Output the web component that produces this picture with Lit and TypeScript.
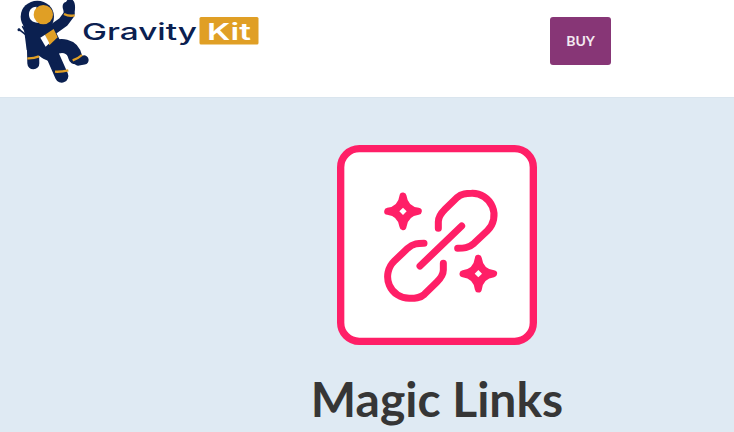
import { LitElement, html, css, svg } from "lit";
import { customElement } from "lit/decorators.js";

const NAVY = "#0b2050";
const GOLD = "#e09f25";

@customElement("app-root")
export class AppRoot extends LitElement {
  static styles = css`
    :host { display: block; height: 432px; overflow: hidden; background: #dfeaf3; font-family: Lato, "Liberation Sans", sans-serif; }
    .top { display: flex; align-items: flex-start; height: 97px; background: #fff; box-shadow: 0 1px 1px rgba(0,0,0,.02); }
    .logo { display: block; width: 270px; height: 97px; flex: none; }
    .logo text { font-family: Inter, "Liberation Sans", sans-serif; }
    .buy { flex: none; display: flex; align-items: center; justify-content: center; width: 61px; height: 48px; padding-bottom: 2px; margin: 17px 0 0 280px; border-radius: 3px; background: #873676; color: #f4e9f1; font-size: 14px; font-weight: 700; box-sizing: border-box; }
    .hero { display: flex; flex-direction: column; align-items: center; padding: 48px 0 0 140px; }
    .mark { display: block; width: 200px; height: 200px; }
    h1 { margin: 18px 0 0; font-size: 48px; line-height: 72px; font-weight: 700; color: #363636; white-space: nowrap; }
  `;

  private star(cx: number, cy: number) {
    return svg`<g transform="translate(${cx} ${cy})">
      <path fill="#ff1f67" d="M0-46Q5-5 46 0Q5 5 0 46Q-5 5-46 0Q-5-5 0-46Z"/>
      <path fill="#fff" stroke="none" d="M0-11L11 0L0 11L-11 0Z"/>
    </g>`;
  }

  render() {
    const upper = "M325 265V245C325 230 335 218 345 208L382 172C395 160 410 160 425 160A65 65 0 0 1 472 272L432 310C415 325 400 325 383 325";
    return html`
      <div class="top">
        <svg class="logo" viewBox="0 0 270 97">
          <g transform="translate(10 0) scale(.3333)">
            <path d="M27 88L47 104M38 80L48 98" stroke=${NAVY} stroke-width="5" stroke-linecap="round" fill="none"/>
            <circle cx="27" cy="89" r="4.500" fill=${NAVY}/>
            <g fill="none" stroke=${NAVY} stroke-linecap="round" stroke-linejoin="round">
              <path stroke-width="36" d="M68 115L70 190"/>
              <path stroke-width="40" d="M125 160L155 228"/>
              <path stroke-width="42" d="M125 150C150 130 188 135 196 172"/>
              <path stroke-width="32" d="M112 100L160 66L178 42"/>
              <path stroke-width="28" d="M205 183L222 180"/>
            </g>
            <ellipse cx="82" cy="50" rx="50" ry="48" fill=${NAVY}/>
            <path fill=${NAVY} d="M40 72L130 80L152 125L140 190C115 185 95 175 85 165L50 150Z"/>
            <path fill=${NAVY} d="M160 30C156 18 158 8 168 6L172 0L188 0C196 6 197 24 193 42L162 44Z"/>
            <path fill="#fff" d="M80 20C62 20 56 34 57 46C58 60 70 70 86 68C76 50 76 34 80 20Z"/>
            <circle cx="100" cy="44" r="29" fill=${GOLD}/>
            <path fill=${GOLD} d="M105 104L131 87L143 112L118 136Z"/>
            <path fill="#fff" d="M91 113L105 104L118 130L107 140Z"/>
            <path d="M52 175Q70 176 87 169M135 215Q155 216 175 211M188 181Q204 176 216 165M162 42Q178 50 194 46" stroke=${GOLD} stroke-width="7" fill="none"/>
          </g>
          <text x="82" y="39.500" font-size="22.500" font-weight="500" fill=${NAVY} textLength="115" lengthAdjust="spacingAndGlyphs">Gravity</text>
          <rect x="199.500" y="17" width="59" height="27.500" rx="1.500" fill=${GOLD}/>
          <text x="207" y="39.500" font-size="23" font-weight="600" fill="#fff" textLength="44" lengthAdjust="spacingAndGlyphs">Kit</text>
        </svg>
        <div class="buy">BUY</div>
      </div>
      <main class="hero">
        <svg class="mark" viewBox="21 15 600 600">
          <rect x="32" y="26" width="578" height="578" rx="56" fill="#fff" stroke="#ff1f67" stroke-width="22"/>
          <g fill="none" stroke="#ff1f67" stroke-width="21" stroke-linecap="round" stroke-linejoin="round">
            <path d=${upper}/>
            <path d=${upper} transform="rotate(180 332.500 317.500)"/>
            <path d="M270 378L395 258"/>
            ${this.star(219, 214)}
            ${this.star(445, 401)}
          </g>
        </svg>
        <h1>Magic Links</h1>
      </main>
    `;
  }
}
